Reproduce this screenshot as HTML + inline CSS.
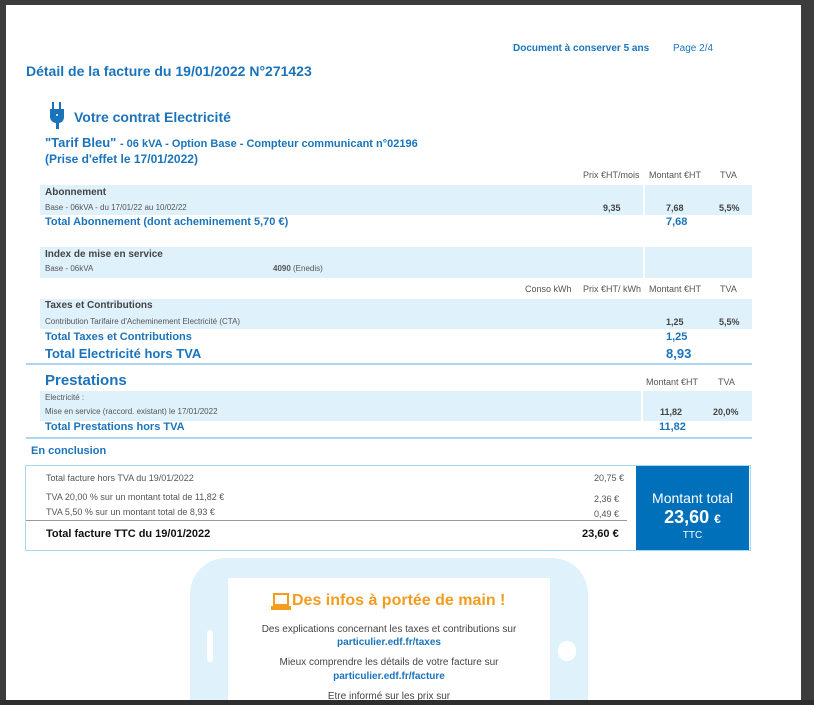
<!DOCTYPE html>
<html style="margin:0;width:814px;height:705px;overflow:hidden"><head><meta charset="utf-8"><style>
body{margin:0;width:814px;height:705px;background:#3c3c3c;position:relative;overflow:hidden;font-family:"Liberation Sans",Arial,sans-serif}
.pg{position:absolute;left:6px;top:5px;width:795px;height:695px;background:#fff}
.a{position:absolute;white-space:nowrap}
.b{color:#1b74bb;font-weight:bold}
.g{color:#555;font-size:9px}
.band{position:absolute;left:40px;width:712px;background:#dff1fb}
.div{position:absolute;top:0;bottom:0;width:2px;background:#fff;left:603px}
.hl{position:absolute;height:2px;background:#a9d7f1}
</style></head><body>
<div class="pg"></div>
<div class="a b" style="left:513px;top:43px;font-size:10px">Document à conserver 5 ans</div>
<div class="a" style="left:673px;top:43px;font-size:10px;color:#1b74bb">Page 2/4</div>
<div class="a b" style="left:26px;top:63px;font-size:14px">Détail de la facture du 19/01/2022 N°271423</div>
<svg class="a" style="left:49px;top:102px" width="16" height="28" viewBox="0 0 16 28"><rect x="3" y="0" width="2" height="7" fill="#1b74bb"/><rect x="10" y="0" width="2" height="7" fill="#1b74bb"/><path d="M1 7h14v8c0 4-3 6-5 6v6h-3v-6c-2 0-6-2-6-6z" fill="#1b74bb"/><circle cx="8" cy="13" r="1" fill="#fff"/></svg>
<div class="a b" style="left:74px;top:109px;font-size:14px">Votre contrat Electricité</div>
<div class="a b" style="left:45px;top:135px;font-size:13px">"Tarif Bleu" <span style="font-size:11px">- 06 kVA - Option Base - Compteur communicant n°02196</span></div>
<div class="a b" style="left:45px;top:152px;font-size:12px">(Prise d'effet le 17/01/2022)</div>

<div class="a g" style="left:583px;top:170px">Prix €HT/mois</div>
<div class="a g" style="left:649px;top:170px">Montant €HT</div>
<div class="a g" style="left:720px;top:170px">TVA</div>
<div class="band" style="top:185px;height:30px"><div class="div"></div></div>
<div class="a" style="left:45px;top:187px;font-size:10px;font-weight:bold;color:#444">Abonnement</div>
<div class="a g" style="left:45px;top:203px;font-size:8px">Base - 06kVA - du 17/01/22 au 10/02/22</div>
<div class="a" style="left:603px;top:203px;font-size:9px;font-weight:bold;color:#444">9,35</div>
<div class="a" style="left:666px;top:203px;font-size:9px;font-weight:bold;color:#444">7,68</div>
<div class="a" style="left:719px;top:203px;font-size:9px;font-weight:bold;color:#444">5,5%</div>
<div class="a b" style="left:45px;top:216px;font-size:11px">Total Abonnement (dont acheminement 5,70 €)</div>
<div class="a b" style="left:666px;top:216px;font-size:11px">7,68</div>

<div class="band" style="top:247px;height:31px"><div class="div"></div></div>
<div class="a" style="left:45px;top:249px;font-size:10px;font-weight:bold;color:#444">Index de mise en service</div>
<div class="a g" style="left:45px;top:264px;font-size:8px">Base - 06kVA</div>
<div class="a g" style="left:273px;top:264px;font-size:8px"><b>4090</b> (Enedis)</div>

<div class="a g" style="left:525px;top:284px">Conso kWh</div>
<div class="a g" style="left:583px;top:284px">Prix €HT/ kWh</div>
<div class="a g" style="left:649px;top:284px">Montant €HT</div>
<div class="a g" style="left:720px;top:284px">TVA</div>
<div class="band" style="top:299px;height:30px"></div>
<div class="a" style="left:45px;top:300px;font-size:10px;font-weight:bold;color:#444">Taxes et Contributions</div>
<div class="a g" style="left:45px;top:317px;font-size:8px">Contribution Tarifaire d'Acheminement Electricité (CTA)</div>
<div class="a" style="left:666px;top:317px;font-size:9px;font-weight:bold;color:#444">1,25</div>
<div class="a" style="left:719px;top:317px;font-size:9px;font-weight:bold;color:#444">5,5%</div>
<div class="a b" style="left:45px;top:331px;font-size:11px">Total Taxes et Contributions</div>
<div class="a b" style="left:666px;top:331px;font-size:11px">1,25</div>
<div class="a b" style="left:45px;top:346px;font-size:13px">Total Electricité hors TVA</div>
<div class="a b" style="left:666px;top:346px;font-size:13px">8,93</div>
<div class="hl" style="left:26px;width:726px;top:363px"></div>

<div class="a b" style="left:45px;top:372px;font-size:15px">Prestations</div>
<div class="a g" style="left:646px;top:377px">Montant €HT</div>
<div class="a g" style="left:718px;top:377px">TVA</div>
<div class="band" style="top:391px;height:30px"><div class="div" style="left:601px"></div></div>
<div class="a g" style="left:45px;top:393px;font-size:8px">Electricité :</div>
<div class="a g" style="left:45px;top:407px;font-size:8px">Mise en service (raccord. existant) le 17/01/2022</div>
<div class="a" style="left:660px;top:407px;font-size:9px;font-weight:bold;color:#444">11,82</div>
<div class="a" style="left:713px;top:407px;font-size:9px;font-weight:bold;color:#444">20,0%</div>
<div class="a b" style="left:45px;top:421px;font-size:11px">Total Prestations hors TVA</div>
<div class="a b" style="left:659px;top:421px;font-size:11px">11,82</div>
<div class="hl" style="left:26px;width:726px;top:437px"></div>

<div class="a b" style="left:31px;top:445px;font-size:11px">En conclusion</div>
<div class="a" style="left:25px;top:465px;width:724px;height:84px;border:1px solid #a9d7f1"></div>
<div class="a" style="left:636px;top:466px;width:113px;height:84px;background:#0070bb;color:#fff;text-align:center">
<div style="font-size:14px;margin-top:24px">Montant total</div>
<div style="font-size:18px;font-weight:bold;margin-top:1px">23,60 <span style="font-size:12px">€</span></div>
<div style="font-size:10px;margin-top:2px">TTC</div></div>
<div class="a g" style="left:46px;top:473px">Total facture hors TVA du 19/01/2022</div>
<div class="a g" style="left:594px;top:473px">20,75 €</div>
<div class="a g" style="left:46px;top:492px">TVA 20,00 % sur un montant total de 11,82 €</div>
<div class="a g" style="left:594px;top:494px">2,36 €</div>
<div class="a g" style="left:46px;top:507px">TVA 5,50 % sur un montant total de 8,93 €</div>
<div class="a g" style="left:594px;top:509px">0,49 €</div>
<div class="a" style="left:26px;top:520px;width:601px;height:1px;background:#999"></div>
<div class="a" style="left:46px;top:528px;font-size:11px;font-weight:bold;color:#111">Total facture TTC du 19/01/2022</div>
<div class="a" style="left:582px;top:528px;font-size:11px;font-weight:bold;color:#111">23,60 €</div>

<div class="a" style="left:190px;top:558px;width:398px;height:142px;background:#dff1fb;border-radius:36px 36px 0 0"></div>
<div class="a" style="left:207px;top:630px;width:6px;height:32px;background:#fff;border-radius:3px"></div>
<div class="a" style="left:558px;top:641px;width:18px;height:20px;background:#fff;border-radius:9px"></div>
<div class="a" style="left:228px;top:578px;width:322px;height:122px;background:#fff;overflow:hidden"></div>
<svg class="a" style="left:271px;top:593px" width="20" height="18" viewBox="0 0 20 18"><rect x="3" y="1" width="14" height="11" fill="none" stroke="#f39c1d" stroke-width="2"/><rect x="0" y="13" width="20" height="4" fill="#f39c1d"/></svg>
<div class="a" style="left:292px;top:592px;font-size:16px;font-weight:bold;color:#f39c1d">Des infos à portée de main !</div>
<div class="a" style="left:228px;width:322px;text-align:center;top:624px;font-size:10px;color:#444">Des explications concernant les taxes et contributions sur</div>
<div class="a b" style="left:228px;width:322px;text-align:center;top:637px;font-size:10px">particulier.edf.fr/taxes</div>
<div class="a" style="left:228px;width:322px;text-align:center;top:657px;font-size:10px;color:#444">Mieux comprendre les détails de votre facture sur</div>
<div class="a b" style="left:228px;width:322px;text-align:center;top:671px;font-size:10px">particulier.edf.fr/facture</div>
<div class="a" style="left:228px;width:322px;text-align:center;top:691px;font-size:10px;color:#444">Etre informé sur les prix sur</div>
<div class="a" style="left:0;top:700px;width:814px;height:5px;background:#2e2e2e"></div>
</body></html>
